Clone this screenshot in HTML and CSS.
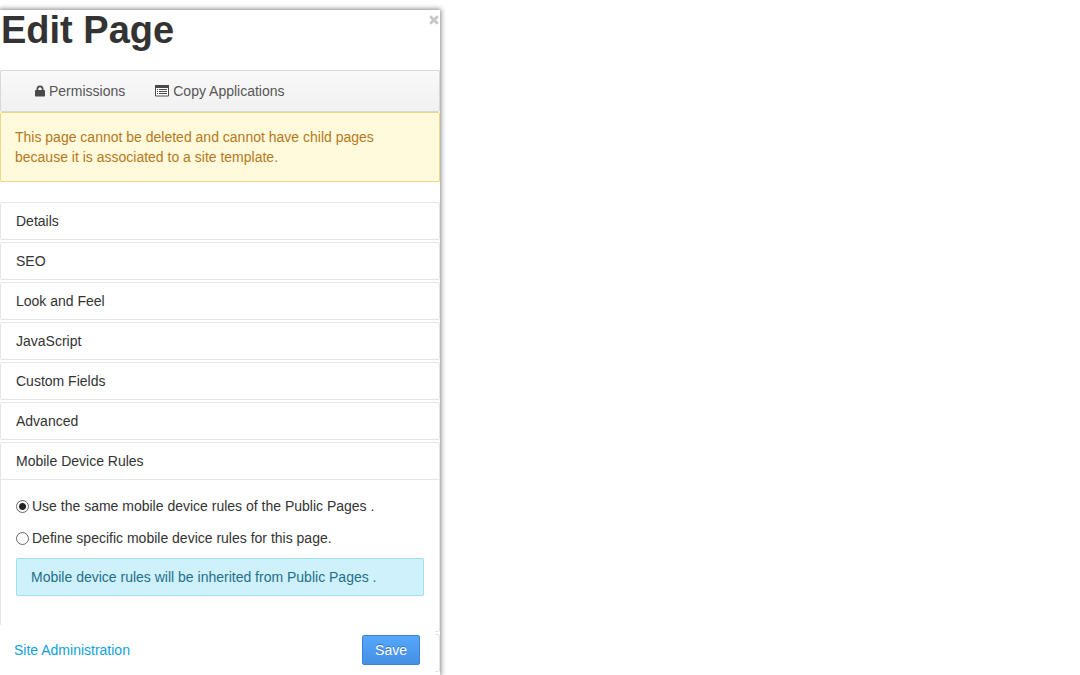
FILE: index.html
```html
<!DOCTYPE html>
<html lang="en">
<head>
<meta charset="utf-8">
<title>Edit Page</title>
<link rel="stylesheet" href="styles.css">
</head>
<body>
<main class="panel">
  <header class="panel-header">
    <h1 class="title">Edit Page</h1>
    <button class="close" type="button" aria-label="Close">
      <svg width="10" height="10" viewBox="0 0 10 10"><path d="M1.200 1.200 8.800 8.800M8.800 1.200 1.200 8.800" fill="none" stroke="#c6c6c6" stroke-width="2.800"/></svg>
    </button>
  </header>
  <nav class="toolbar">
    <a class="tool" href="#permissions">
      <svg width="10" height="12" viewBox="0 0 10 12"><path d="M1.500 5V4a3.500 3.500 0 0 1 7 0v1H9.300q.7 0 .7.700V10.800q0 .700-.700.700H.7Q0 11.500 0 10.800V5.700Q0 5 .7 5zM3.200 5h3.600V4a1.800 1.800 0 0 0-3.600 0z" fill="#4a4a4a" fill-rule="evenodd"/></svg>Permissions</a>
    <a class="tool" href="#copy">
      <svg width="14" height="12" viewBox="0 0 14 12"><path d="M.5.500h13v10.500H.5z" fill="#fff" stroke="#4a4a4a"/><path d="M0 0h14v3H0zM2 4h1v1H2zM4 4h8v1H4zM2 6h1v1H2zM4 6h8v1H4zM2 8h1v1H2zM4 8h8v1H4z" fill="#4a4a4a"/></svg>Copy Applications</a>
  </nav>
  <p class="alert warning">This page cannot be deleted and cannot have child pages because it is associated to a site template.</p>
  <div class="accordion">
    <section class="group"><button class="heading" type="button">Details</button></section>
    <section class="group"><button class="heading" type="button">SEO</button></section>
    <section class="group"><button class="heading" type="button">Look and Feel</button></section>
    <section class="group"><button class="heading" type="button">JavaScript</button></section>
    <section class="group"><button class="heading" type="button">Custom Fields</button></section>
    <section class="group"><button class="heading" type="button">Advanced</button></section>
    <section class="group">
      <button class="heading" type="button" aria-expanded="true">Mobile Device Rules</button>
      <div class="body">
        <label class="choice"><input type="radio" name="rules" checked>Use the same mobile device rules of the Public Pages .</label>
        <label class="choice"><input type="radio" name="rules">Define specific mobile device rules for this page.</label>
        <p class="alert info">Mobile device rules will be inherited from Public Pages .</p>
      </div>
    </section>
    <section class="group collapsed"></section>
  </div>
  <footer class="actions">
    <a class="admin" href="#admin">Site Administration</a>
    <button class="save" type="submit">Save</button>
  </footer>
</main>
</body>
</html>
```
FILE: styles.css
```css
* { box-sizing: border-box; }
body {
  margin: 0;
  padding-top: 10px;
  height: 100vh;
  overflow: hidden;
  background: #fff;
  color: #333;
  font: 14px/20px "Liberation Sans", Arial, sans-serif;
}
button, input { font: inherit; color: inherit; }
.panel {
  position: relative;
  width: 100%;
  max-width: 440px;
  height: 100%;
  box-shadow: 0 0 5px 1px #888;
}
.panel-header {
  display: flex;
  justify-content: space-between;
  align-items: flex-start;
  height: 60px;
}
.title { margin: 0; padding-left: 1px; font-size: 38px; line-height: 40px; font-weight: bold; }
.close {
  display: flex;
  border: 0;
  padding: 5px 1px;
  background: none;
}
.toolbar {
  display: flex;
  gap: 30px;
  padding: 10px 34px;
  border: 1px solid #d8d8d8;
  border-radius: 2px;
  background: linear-gradient(#f9f9f9, #f1f1f1);
}
.tool { display: flex; align-items: center; gap: 4px; color: #555; text-decoration: none; }
.alert { margin: 0; border: 1px solid; border-radius: 2px; }
.warning {
  padding: 14px;
  border-color: #ebd68c;
  background: #fffadb;
  color: #b5781c;
}
.accordion { display: flex; flex-direction: column; gap: 2px; padding-top: 20px; }
.group { border: 1px solid #e5e5e5; border-radius: 2px; }
.collapsed { height: 38px; }
.heading {
  display: block;
  width: 100%;
  padding: 8px 15px;
  border: 0;
  background: none;
  text-align: left;
}
.body {
  display: flex;
  flex-direction: column;
  gap: 12px;
  padding: 16px 15px 35px;
  border-top: 1px solid #e5e5e5;
}
.choice { display: flex; align-items: center; gap: 3px; }
.choice input {
  appearance: none;
  width: 13px;
  height: 13px;
  margin: 0;
  border: 1px solid #666;
  border-radius: 50%;
  background: #fff;
}
.choice input:checked { background: radial-gradient(circle, #222 3px, #fff 4px); }
.info {
  margin-top: -2px;
  padding: 8px 14px;
  border-color: #a0dff0;
  background: #cff1fb;
  color: #1f6f8b;
}
.actions {
  position: absolute;
  left: 0;
  right: 5px;
  bottom: 0;
  display: flex;
  justify-content: space-between;
  align-items: center;
  padding: 10px 15px 10px 14px;
  background: #fff;
}
.admin { color: #109fda; text-decoration: none; }
.save {
  padding: 4px 12px;
  border: 1px solid #3f83d0;
  border-radius: 2px;
  background: linear-gradient(#54a8fc, #4590e5);
  color: #fff;
  text-shadow: 0 -1px 0 #3b76b8;
}
```
